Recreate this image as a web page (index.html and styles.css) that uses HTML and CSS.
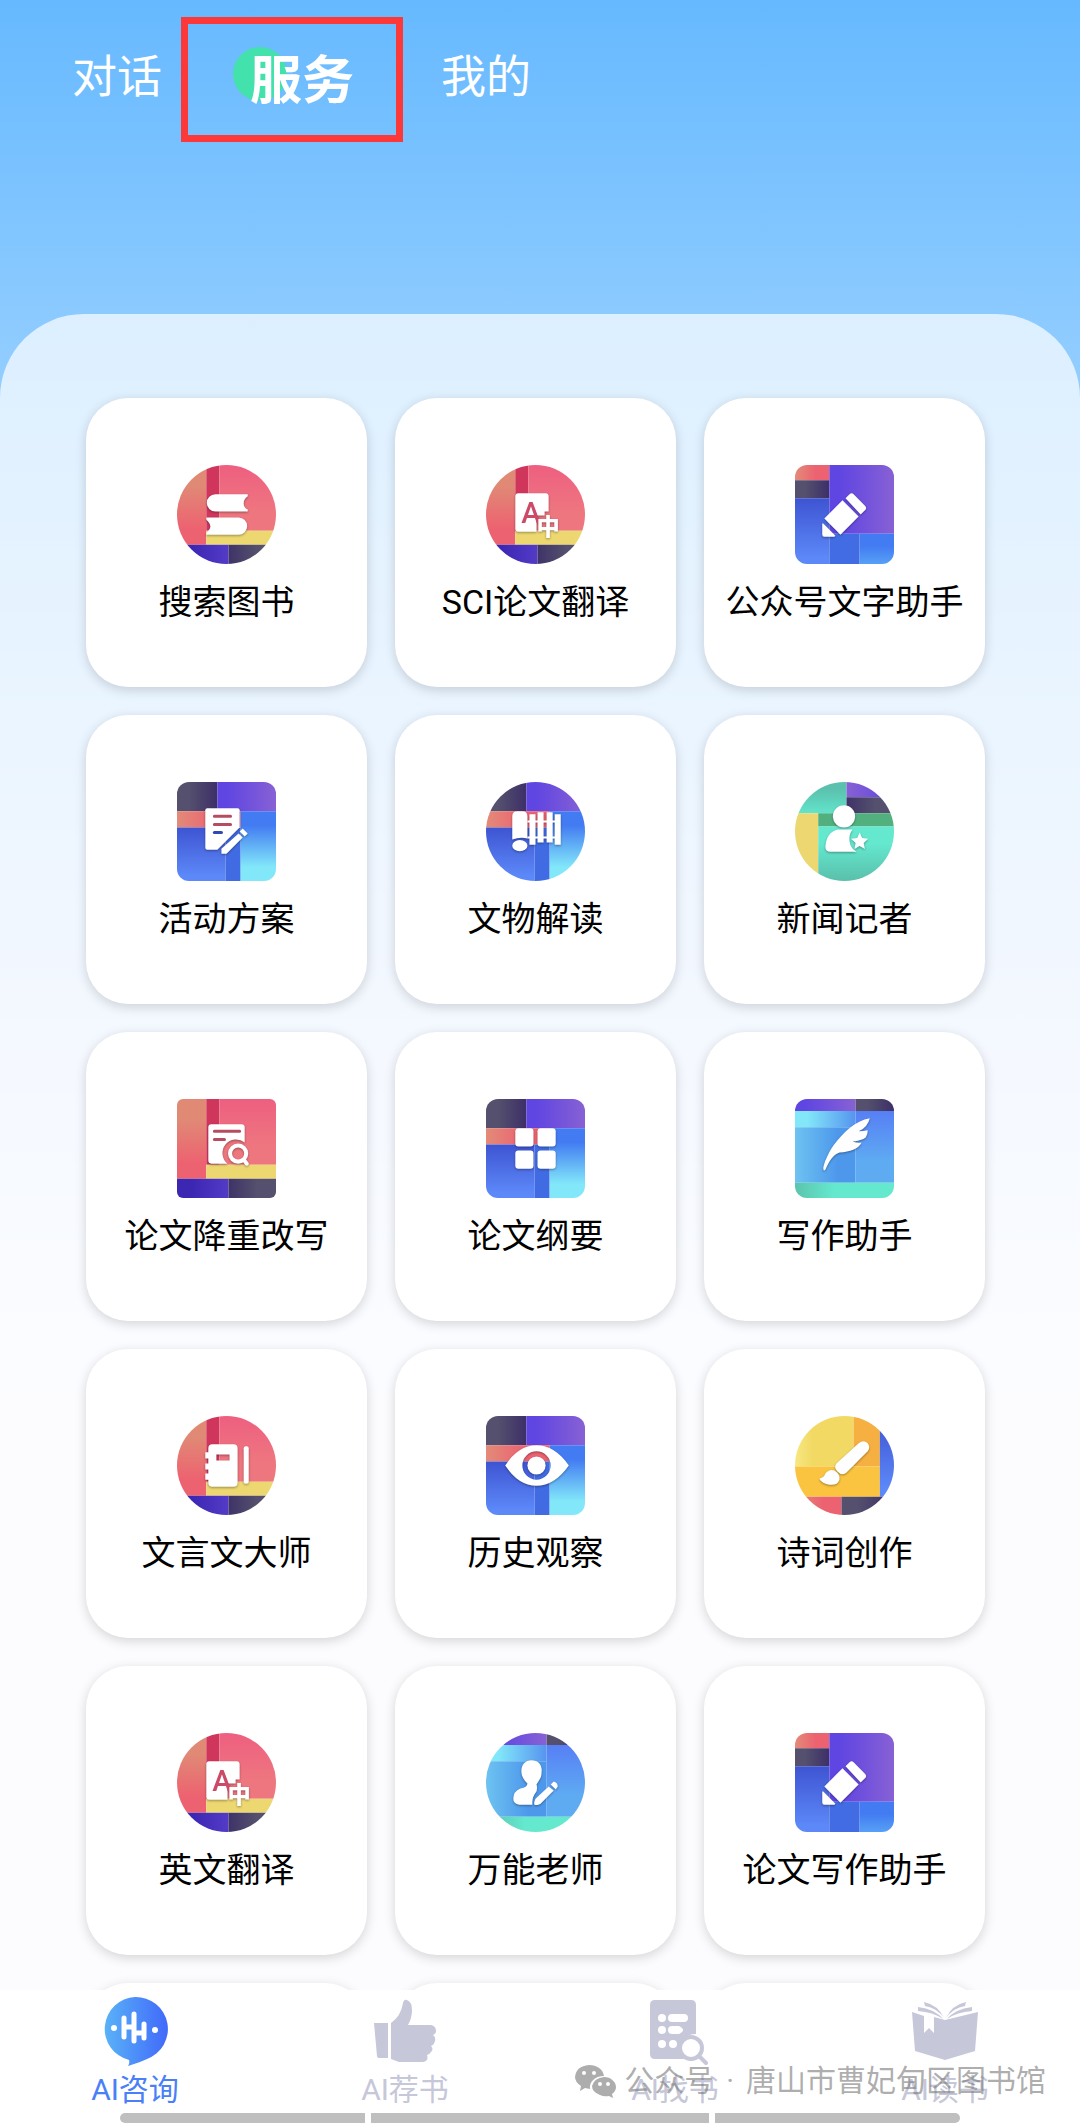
FILE: index.html
```html
<!DOCTYPE html>
<html lang="zh-CN">

<head>
    <meta charset="UTF-8">
    <meta name="viewport" content="width=device-width, initial-scale=1.0">
    <title>服务</title>
    <link rel="stylesheet" href="styles.css">
</head>

<body>

    <!-- Shared gradients and icon backgrounds -->
    <svg class="defs" aria-hidden="true">
        <defs>
            <linearGradient id="coral-v" x2="0" y2="1"><stop stop-color="#e08a76" /><stop offset=".25" stop-color="#e08a76" /><stop offset=".8" stop-color="#ed6270" /></linearGradient>
            <linearGradient id="pink-v" x2="0" y2="1"><stop stop-color="#ee5f80" /><stop offset=".7" stop-color="#ee767f" /></linearGradient>
            <linearGradient id="coral-h"><stop stop-color="#e28b79" /><stop offset=".6" stop-color="#ec6271" /></linearGradient>
            <linearGradient id="indigo-h"><stop offset=".3" stop-color="#3c27b3" /><stop offset="1" stop-color="#533bc6" /></linearGradient>
            <linearGradient id="ink-h"><stop stop-color="#3f3368" /><stop offset=".6" stop-color="#54506d" /></linearGradient>
            <linearGradient id="ink-r"><stop offset=".3" stop-color="#54506d" /><stop offset="1" stop-color="#3d2f68" /></linearGradient>
            <linearGradient id="violet-h"><stop offset=".15" stop-color="#5f45e2" /><stop offset="1" stop-color="#8761d4" /></linearGradient>
            <linearGradient id="violet-r"><stop stop-color="#8761d4" /><stop offset="1" stop-color="#5f45e2" /></linearGradient>
            <linearGradient id="blue-v" x2="0" y2="1"><stop stop-color="#3e54d2" /><stop offset=".9" stop-color="#5c88f8" /></linearGradient>
            <linearGradient id="cyan-v" x2="0" y2="1"><stop offset=".2" stop-color="#437bf2" /><stop offset=".8" stop-color="#82e7f9" /></linearGradient>
            <linearGradient id="cyan-h"><stop offset=".2" stop-color="#82e7f9" /><stop offset="1" stop-color="#5694ef" /></linearGradient>
            <linearGradient id="azure-v" x2="0" y2="1"><stop offset=".4" stop-color="#437bf2" /><stop offset="1" stop-color="#56a0f6" /></linearGradient>
            <linearGradient id="azure-h"><stop stop-color="#6dc3f1" /><stop offset=".7" stop-color="#4e98ec" /></linearGradient>
            <linearGradient id="sky-v" x2="0" y2="1"><stop stop-color="#577ff5" /><stop offset=".7" stop-color="#5eabf2" /></linearGradient>
            <linearGradient id="teal-v" x2="0" y2="1"><stop offset=".3" stop-color="#64e9cf" /><stop offset="1" stop-color="#5abfab" /></linearGradient>
            <linearGradient id="teal-r" x2="0" y2="1"><stop offset=".2" stop-color="#5bc0ad" /><stop offset="1" stop-color="#62e4cb" /></linearGradient>
            <linearGradient id="teal-h"><stop stop-color="#5cc4ad" /><stop offset=".4" stop-color="#64e9cf" /></linearGradient>
            <linearGradient id="lemon-h"><stop stop-color="#f8e882" /><stop offset=".3" stop-color="#f1d964" /></linearGradient>
            <linearGradient id="bubble-h"><stop stop-color="#59b2f8" /><stop offset="1" stop-color="#4169fa" /></linearGradient>

            <g id="bg-red">
                <path fill="url(#coral-v)" d="M0 0h29v79H0z" />
                <path fill="#d0365c" d="M29 0h13v65H29z" />
                <path fill="url(#pink-v)" d="M42 0h56v65H42z" />
                <path fill="#ecd770" d="M29 65h69v14H29z" />
                <path fill="url(#indigo-h)" d="M0 79h51v19H0z" />
                <path fill="url(#ink-h)" d="M51 79h47v19H51z" />
            </g>
            <g id="bg-purple">
                <path fill="url(#coral-h)" d="M0 0h34v15H0z" />
                <path fill="url(#ink-r)" d="M0 15h34v18H0z" />
                <path fill="url(#blue-v)" d="M0 33h34v65H0z" />
                <path fill="url(#violet-h)" d="M34 0h64v68H34z" />
                <path fill="#426ce3" d="M34 68h30v30H34z" />
                <path fill="url(#azure-v)" d="M64 68h34v30H64z" />
            </g>
            <g id="bg-blue">
                <path fill="url(#ink-r)" d="M0 0h40v29H0z" />
                <path fill="url(#violet-h)" d="M40 0h58v29H40z" />
                <path fill="url(#coral-h)" d="M0 29h63v16H0z" />
                <path fill="url(#blue-v)" d="M0 45h48v53H0z" />
                <path fill="#416be3" d="M48 45h15v53H48z" />
                <path fill="url(#cyan-v)" d="M63 29h35v69H63z" />
            </g>
            <g id="bg-green">
                <path fill="url(#teal-r)" d="M0 0h51v31H0z" />
                <path fill="url(#violet-r)" d="M51 0h47v15H51z" />
                <path fill="url(#ink-h)" d="M51 15h47v16H51z" />
                <path fill="#ecd770" d="M0 31h23v67H0z" />
                <path fill="#52b07f" d="M23 31h75v13H23z" />
                <path fill="url(#teal-v)" d="M23 44h75v54H23z" />
            </g>
            <g id="bg-sky">
                <path fill="url(#violet-h)" d="M0 0h60v12H0z" />
                <path fill="url(#ink-r)" d="M60 0h38v12H60z" />
                <path fill="url(#cyan-h)" d="M0 12h60v16H0z" />
                <path fill="url(#azure-h)" d="M0 28h60v55H0z" />
                <path fill="url(#sky-v)" d="M60 12h38v71H60z" />
                <path fill="url(#teal-h)" d="M0 83h98v15H0z" />
            </g>
            <g id="bg-yellow">
                <path fill="url(#lemon-h)" d="M0 0h58v50H0z" />
                <path fill="#f5b041" d="M58 0h26v50H58z" />
                <path fill="#fac440" d="M0 50h84v30H0z" />
                <path fill="url(#blue-v)" d="M84 0h14v80H84z" />
                <path fill="url(#coral-h)" d="M0 80h46v18H0z" />
                <path fill="url(#ink-r)" d="M46 80h52v18H46z" />
            </g>

            <g id="glyph-translate">
                <path d="M32 28h27a3 3 0 0 1 3 3v15h-4v4h-8v16H32a3 3 0 0 1-3-3V31a3 3 0 0 1 3-3z" />
                <text class="letter-a" x="35" y="57">A</text>
                <text class="letter-zh" x="50" y="69">中</text>
            </g>
            <g id="glyph-pencil">
                <path d="M47 35l16 16-18 18-16-16z" />
                <path d="M50 33l4-4q2-2 4 0l11 11q2 2 1 4l-5 5z" />
                <path d="M28 58l12 12-1 1H29q-2 0-2-2V58z" />
            </g>
        </defs>
    </svg>

    <header>
        <nav class="tabs">
            <a class="tab" href="#chat">对话</a>
            <a class="tab active" href="#service"><span>服务</span></a>
            <a class="tab" href="#mine">我的</a>
        </nav>
    </header>

    <main>
        <div class="card-grid">
            <a class="card" href="#">
                <svg class="icon round" viewBox="0 0 98 98">
                    <use href="#bg-red" />
                    <g class="glyph">
                        <path d="M38 29h32v2q-4 3-4 7t4 6v2H38a8 8 0 0 1 0-17z" />
                        <path d="M29 52h32a8 8 0 0 1 0 17H29v-2q4-3 4-6t-4-7z" />
                    </g>
                </svg>
                <span>搜索图书</span>
            </a>
            <a class="card" href="#">
                <svg class="icon round" viewBox="0 0 98 98">
                    <use href="#bg-red" />
                    <use class="glyph" href="#glyph-translate" />
                </svg>
                <span>SCI论文翻译</span>
            </a>
            <a class="card" href="#">
                <svg class="icon" viewBox="0 0 98 98">
                    <use href="#bg-purple" />
                    <use class="glyph" href="#glyph-pencil" />
                </svg>
                <span>公众号文字助手</span>
            </a>

            <a class="card" href="#">
                <svg class="icon" viewBox="0 0 98 98">
                    <use href="#bg-blue" />
                    <g class="glyph">
                        <path d="M30 26h30a2 2 0 0 1 2 2v17L40 67H30a2 2 0 0 1-2-2V28a2 2 0 0 1 2-2z" />
                        <path d="M61 51l4 4-16 16h-5v-5zM65 46l5 5-3 3-5-5z" />
                    </g>
                    <path class="line red" d="M37 34h16M37 42h16" />
                    <path class="line navy" d="M37 50h7" />
                </svg>
                <span>活动方案</span>
            </a>
            <a class="card" href="#">
                <svg class="icon round" viewBox="0 0 98 98">
                    <use href="#bg-blue" />
                    <g class="glyph">
                        <path d="M26 34q0-5 5-5h5q5 0 5 5v22q-7-2-15 1z" />
                        <ellipse cx="33.500" cy="63" rx="7.500" ry="5.500" />
                        <path d="M43 32h6v30h-6zM51 30h6v30h-6zM60 30h6v30h-6zM68 32h6v30h-6z" />
                        <path d="M41 38h29v2H41zM41 54h29v2H41z" />
                    </g>
                </svg>
                <span>文物解读</span>
            </a>
            <a class="card" href="#">
                <svg class="icon round" viewBox="0 0 98 98">
                    <use href="#bg-green" />
                    <g class="glyph">
                        <circle cx="48.500" cy="34" r="11" />
                        <path d="M42 47h15q-4 5-3 12t7 10H35q-5 0-5-5 1-14 12-17z" />
                        <path d="M64 50l2.500 5.500 6 .8-4.500 4 1.200 6-5.200-3-5.200 3 1.200-6-4.500-4 6-.8z" />
                    </g>
                </svg>
                <span>新闻记者</span>
            </a>

            <a class="card" href="#">
                <svg class="icon square" viewBox="0 0 98 98">
                    <use href="#bg-red" />
                    <path class="glyph" d="M34 25h30a3 3 0 0 1 3 3v15a13 13 0 0 0-17 21H34a3 3 0 0 1-3-3V28a3 3 0 0 1 3-3z" />
                    <path class="line red" d="M37 32h25M37 40h10" />
                    <g class="glyph outline">
                        <circle cx="60.500" cy="54" r="8" />
                        <path d="M66 60l3 4" />
                    </g>
                </svg>
                <span>论文降重改写</span>
            </a>
            <a class="card" href="#">
                <svg class="icon" viewBox="0 0 98 98">
                    <use href="#bg-blue" />
                    <g class="glyph">
                        <rect x="29" y="29" width="18" height="18" rx="3" />
                        <rect x="51" y="29" width="18" height="18" rx="3" />
                        <rect x="29" y="51" width="18" height="18" rx="3" />
                        <rect x="51" y="51" width="18" height="18" rx="3" />
                    </g>
                </svg>
                <span>论文纲要</span>
            </a>
            <a class="card" href="#">
                <svg class="icon" viewBox="0 0 98 98">
                    <use href="#bg-sky" />
                    <path class="glyph" d="M74 19C60 21 47 34 38 46c-6 9-9 17-10 22q0 4 2 2c4-9 8-15 14-17 11-1 18-3 22-10q-4 1-9-1 9-1 13-4 2-3 2-7-4 1-9 1 9-4 11-13z" />
                </svg>
                <span>写作助手</span>
            </a>

            <a class="card" href="#">
                <svg class="icon round" viewBox="0 0 98 98">
                    <use href="#bg-red" />
                    <g class="glyph">
                        <path fill-rule="evenodd" d="M35 28h21q4 0 4 4v34q0 4-4 4H35q-4 0-4-4v-3h-3v-6h3v-4h-3v-6h3v-5h-3v-6h3v-4q0-4 4-4zM39 38v6h13v-6z" />
                        <rect x="66" y="30" width="5" height="37" rx="2" />
                    </g>
                </svg>
                <span>文言文大师</span>
            </a>
            <a class="card" href="#">
                <svg class="icon" viewBox="0 0 98 98">
                    <use href="#bg-blue" />
                    <g class="glyph">
                        <path fill-rule="evenodd" d="M19 49q13-20 31-20t32 20q-14 20-32 20T19 49zM36 49a14 14 0 1 0 28 0 14 14 0 1 0-28 0z" />
                        <circle cx="50" cy="49" r="9" />
                    </g>
                </svg>
                <span>历史观察</span>
            </a>
            <a class="card" href="#">
                <svg class="icon round" viewBox="0 0 98 98">
                    <use href="#bg-yellow" />
                    <g class="glyph">
                        <path d="M63 27q5-4 9 0 3 4 0 8L51 56q-4 4-9-1-4-4-1-8z" />
                        <path d="M24 62q5-1 6-5 4-5 9-3 6 4 5 9-2 6-10 5-7-1-10-6z" />
                    </g>
                </svg>
                <span>诗词创作</span>
            </a>

            <a class="card" href="#">
                <svg class="icon round" viewBox="0 0 98 98">
                    <use href="#bg-red" />
                    <use class="glyph" href="#glyph-translate" />
                </svg>
                <span>英文翻译</span>
            </a>
            <a class="card" href="#">
                <svg class="icon round" viewBox="0 0 98 98">
                    <use href="#bg-sky" />
                    <g class="glyph">
                        <path d="M45 27c7 0 11 5 10 12 0 6-3 8-5 12q1 3 0 7-5 6-4 13H33q-6-1-6-6 0-7 7-10 7-1 7-5-6-6-6-12c0-7 4-11 10-11z" />
                        <path d="M62 53l5 4-13 13q-3 2-6 1-1-2 1-6zM64 51l3-3q4 1 4 5l-2 3z" />
                    </g>
                </svg>
                <span>万能老师</span>
            </a>
            <a class="card" href="#">
                <svg class="icon" viewBox="0 0 98 98">
                    <use href="#bg-purple" />
                    <use class="glyph" href="#glyph-pencil" />
                </svg>
                <span>论文写作助手</span>
            </a>

            <div class="card"></div>
            <div class="card"></div>
            <div class="card"></div>
        </div>
    </main>

    <footer>
        <nav class="bottom-nav">
            <a class="nav-item current" href="#consult">
                <svg viewBox="0 0 68 70">
                    <path fill="url(#bubble-h)" d="M34 1a32 32 0 0 1 12 62q-6 3-19 7 2-3 1-6A32 32 0 0 1 34 1z" />
                    <path class="wave" d="M23 22v19M33 18v27M43 28v14M23 31h10M33 37h10" />
                    <circle cx="13" cy="32" r="3" fill="#fff" />
                    <circle cx="54" cy="34" r="3" fill="#fff" />
                </svg>
                <span>AI咨询</span>
            </a>
            <a class="nav-item" href="#recommend">
                <svg viewBox="0 0 68 70">
                    <path d="M3 27h14v35H8q-2 0-2-2zM20 27q10-7 12-20 1-4 4-3 5 2 5 10 0 8-4 15h23q5 1 5 6 0 3-3 4 3 2 2 6-1 4-4 5 3 3 0 6-2 3-4 3 2 6-4 7H28l-8-3z" />
                </svg>
                <span>AI荐书</span>
            </a>
            <a class="nav-item" href="#find">
                <svg viewBox="0 0 68 70">
                    <g transform="translate(5 0)">
                        <path fill-rule="evenodd" d="M9 4h36q5 0 5 5v29a15 15 0 0 0-12 25H9q-5 0-5-5V9q0-5 5-5zM12 22a4 4 0 1 0 8 0 4 4 0 1 0-8 0M26 18q-4 0-4 4t4 4h12q4 0 4-4t-4-4zM12 34a4 4 0 1 0 8 0 4 4 0 1 0-8 0M26 30q-4 0-4 4t4 4h7q4-2 4-4t-4-4zM12 48a4 4 0 1 0 8 0 4 4 0 1 0-8 0M23 48a4 4 0 1 0 8 0 4 4 0 1 0-8 0" />
                        <path class="lens" d="M34 52a11 11 0 1 0 22 0 11 11 0 1 0-22 0M53 60l7 7" />
                    </g>
                </svg>
                <span>AI找书</span>
            </a>
            <a class="nav-item" href="#read">
                <svg viewBox="0 0 68 70">
                    <path d="M1 16l12 4v17l5-5 5 5V21l11 3 33-8-3 39-30 9-30-9z" />
                    <path d="M13 6q14 3 20 16Q26 12 14 10zM7 11q17 2 25 12-10-7-25-8zM55 6q-14 3-20 16 7-10 19-12zM61 11q-17 2-25 12 10-7 25-8z" />
                </svg>
                <span>AI读书</span>
            </a>
        </nav>
        <div class="scrollbar"><i></i><i></i><i></i></div>

        <div class="watermark">
            <svg viewBox="0 0 42 34">
                <path fill-rule="evenodd" d="M15 1c8 0 14 4 15 11-9 0-15 6-14 13l-5-1-5 3 1-5Q1 18 1 13 2 2 15 1zM8 9a2 2 0 1 0 4 0 2 2 0 1 0-4 0M18 9a2 2 0 1 0 4 0 2 2 0 1 0-4 0" />
                <path fill-rule="evenodd" d="M30 13c7 0 12 5 12 10q0 4-4 7l1 4-4-2q-5 1-9-1-8-3-8-9 2-8 12-9zM24 20a2 2 0 1 0 4 0 2 2 0 1 0-4 0M32 20a2 2 0 1 0 4 0 2 2 0 1 0-4 0" />
            </svg>
            <span>公众号</span><span class="dot">·</span><span>唐山市曹妃甸区图书馆</span>
        </div>
    </footer>

</body>

</html>
```
FILE: styles.css
```css
* {
    box-sizing: border-box;
    margin: 0;
    padding: 0;
}

body {
    height: 100vh;
    display: flex;
    flex-direction: column;
    overflow: hidden;
    font-family: Roboto, "Noto Sans CJK SC", sans-serif;
    background: linear-gradient(#66b9ff 0, #8bcaff 314px, #b4dbff 680px, #dbe8ff 1040px, #f3f6fe 1400px, #f3f6fe 100%);
}

a {
    color: inherit;
    text-decoration: none;
}

.defs {
    position: absolute;
    width: 0;
    height: 0;
}

/* Top tabs */
header {
    flex: none;
    height: 314px;
    padding: 17px 72px;
    color: #fff;
}

.tabs {
    display: flex;
    align-items: center;
    gap: 19px;
}

.tab {
    padding-bottom: 4px;
    font-size: 45px;
    font-weight: 400;
    line-height: 60px;
}

.tab.active {
    width: 222px;
    height: 125px;
    margin-right: 19px;
    padding: 25px 0 0 62px;
    border: 7px solid #fc3838;
    font-size: 52px;
    font-weight: 700;
    line-height: 66px;
}

.tab.active span {
    position: relative;
    z-index: 1;
}

/* green dot behind the active tab label */
.tab.active span::before {
    content: "";
    position: absolute;
    z-index: -1;
    left: -17px;
    top: -4px;
    width: 54px;
    height: 54px;
    border-radius: 50%;
    background-color: #43e1ac;
}

/* Service cards */
main {
    flex: 1;
    min-height: 0;
    overflow: hidden;
    padding: 84px 95px 0 86px;
    border-radius: 84px 84px 0 0;
    background-color: rgba(255, 255, 255, 0.7);
}

.card-grid {
    display: grid;
    grid-template-columns: repeat(3, 1fr);
    gap: 28px;
}

.card {
    display: flex;
    flex-direction: column;
    align-items: center;
    gap: 14px;
    height: 289px;
    padding-top: 67px;
    border-radius: 42px;
    background-color: #fff;
    box-shadow: 0 3px 12px rgba(0, 0, 0, 0.16);
    color: #000;
    font-size: 34px;
    font-weight: 400;
    line-height: 48px;
    white-space: nowrap;
}

.icon {
    flex: none;
    width: 99px;
    height: 99px;
    border-radius: 12px;
}

.icon.round {
    border-radius: 50%;
}

.icon.square {
    border-radius: 6px;
}

.glyph {
    fill: #fff;
    filter: drop-shadow(0 1px 1px rgba(0, 0, 0, 0.35));
}

.glyph.outline {
    fill: none;
    stroke: #fff;
    stroke-width: 4;
    stroke-linecap: round;
}

.letter-a {
    fill: #cc4a68;
    font-size: 29px;
    font-weight: 500;
}

.letter-zh {
    font-size: 23px;
    font-weight: 900;
}

.line {
    fill: none;
    stroke-width: 3;
    stroke-linecap: round;
}

.line.red {
    stroke: #b64b62;
}

.line.navy {
    stroke: #3148b4;
}

/* Bottom navigation */
footer {
    position: relative;
    flex: none;
    height: 133px;
    background-color: #fff;
}

.bottom-nav {
    display: flex;
    height: 123px;
}

.nav-item {
    flex: 1;
    display: flex;
    flex-direction: column;
    align-items: center;
    gap: 2px;
    padding-top: 6px;
    color: #c6c7d8;
    font-size: 30px;
    font-weight: 400;
    line-height: 44px;
}

.nav-item svg {
    flex: none;
    width: 68px;
    height: 70px;
    fill: #c6c7d8;
}

.nav-item.current {
    color: #4a80f7;
}

.wave {
    fill: none;
    stroke: #fff;
    stroke-width: 5;
    stroke-linecap: round;
}

.lens {
    fill: none;
    stroke: #c6c7d8;
    stroke-width: 4;
    stroke-linecap: round;
}

.scrollbar {
    display: flex;
    gap: 6px;
    height: 10px;
    margin: 0 120px;
    border-radius: 5px;
    overflow: hidden;
}

.scrollbar i {
    flex: 245;
    background-color: #bfbfbf;
}

.scrollbar i:nth-child(2) {
    flex-grow: 338;
}

.watermark {
    position: absolute;
    right: 34px;
    bottom: 20px;
    display: flex;
    align-items: center;
    gap: 8px;
    color: rgba(120, 120, 120, 0.6);
    font-size: 30px;
    font-weight: 400;
    line-height: 44px;
}

.watermark .dot {
    padding: 0 4px;
}

.watermark svg {
    width: 42px;
    height: 34px;
    fill: #adadad;
}
```
